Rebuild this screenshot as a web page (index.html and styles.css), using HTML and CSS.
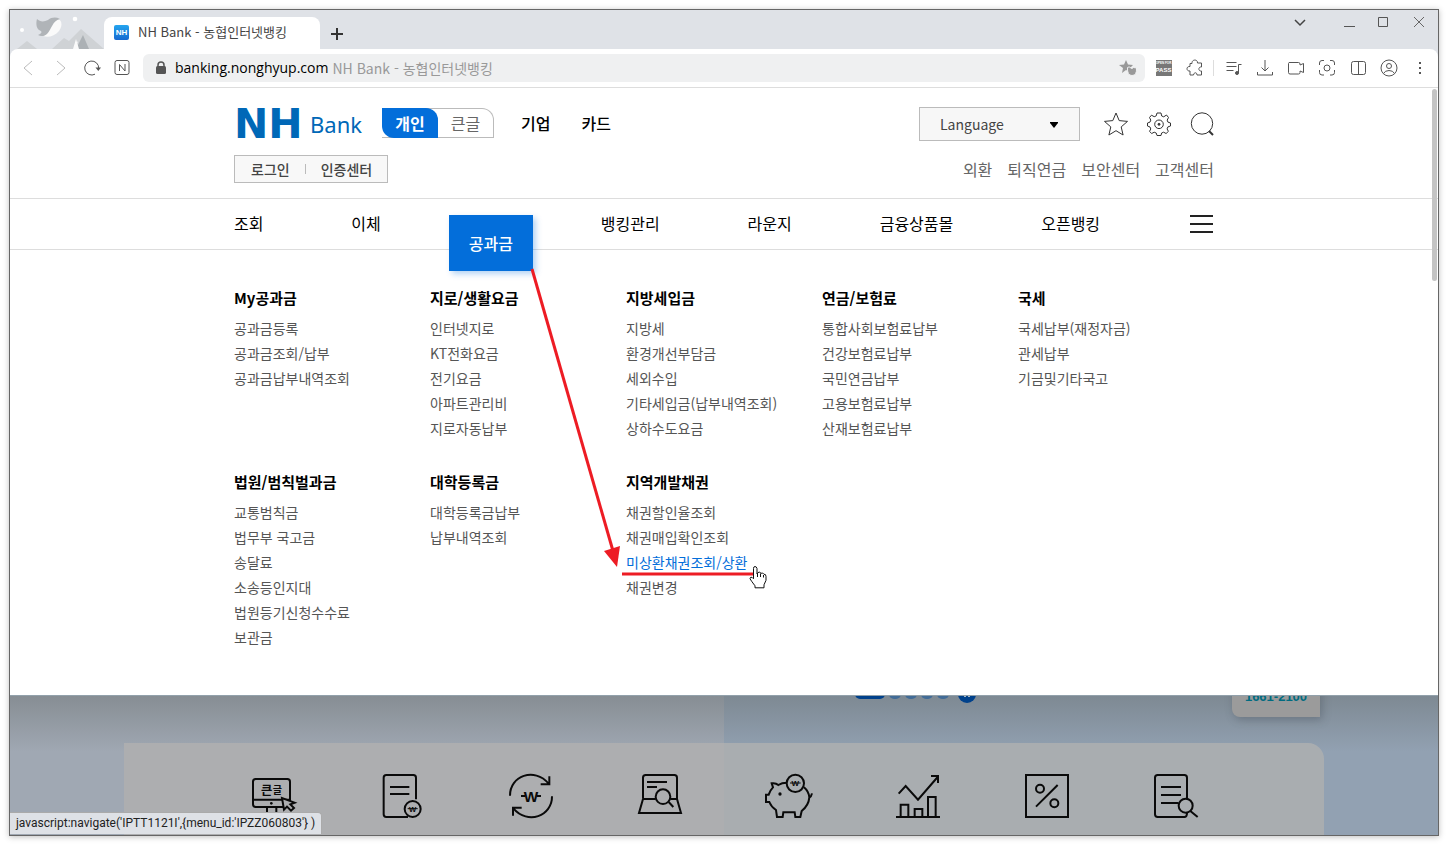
FILE: index.html
```html
<!DOCTYPE html>
<html lang="ko">
<head>
<meta charset="utf-8">
<title>NH Bank - 농협인터넷뱅킹</title>
<link rel="stylesheet" href="styles.css">
</head>
<body>
<div class="window">
  <div class="tabstrip">
    <svg class="theme-art" viewBox="0 0 94 39" aria-hidden="true">
      <path d="M7 39 17 31 27 39Z M42 39 54 28 59 31 71 19 94 39Z" fill="#cfd2d5"/>
      <path d="M66 39 73 25 79 39Z" fill="#acb1b5"/>
      <path d="M63 39 66 29 69 39Z M65 35 68 31 66 39Z" fill="#fafafa"/>
      <circle cx="12" cy="20" r="2" fill="#fff"/><circle cx="65" cy="9" r="2.300" fill="#fff"/>
      <path d="M44 9C51 7 54 14 49 21 45 26 38 28 33 26 41 23 38 13 44 9Z" fill="#fafafa"/>
      <path d="M27 9C30 12 34 12 38 10 42 7 46 7 50 9 42 11 42 19 37 24 35 26 31 27 28 25 33 23 32 21 29 20 26 18 26 12 27 9Z" fill="#b0b4b8"/>
    </svg>
    <div class="tab">
      <span class="favicon">NH</span>
      <span>NH Bank - 농협인터넷뱅킹</span>
    </div>
    <button class="new-tab" aria-label="새 탭"><svg width="14" height="14" viewBox="0 0 14 14"><path d="M7 1v12M1 7h12" stroke="#333" stroke-width="2" fill="none"/></svg></button>
    <div class="window-controls">
      <button class="wc-list" aria-label="탭 목록"><svg width="14" height="14" viewBox="0 0 14 14"><path d="M2 5l5 5 5-5" stroke="#444" stroke-width="1.500" fill="none"/></svg></button>
      <button aria-label="최소화"><svg width="14" height="14" viewBox="0 0 14 14"><path d="M2 11.500h11" stroke="#555" fill="none"/></svg></button>
      <button aria-label="최대화"><svg width="14" height="14" viewBox="0 0 14 14"><path d="M1.500 2.500h9v9h-9z" stroke="#555" fill="none"/></svg></button>
      <button aria-label="닫기"><svg width="14" height="14" viewBox="0 0 14 14"><path d="M2 2l10 10M12 2 2 12" stroke="#666" fill="none"/></svg></button>
    </div>
  </div>

  <div class="toolbar">
    <div class="nav-buttons">
      <button class="nb-back" aria-label="뒤로"><svg class="tool-icon faint" viewBox="0 0 18 18"><path d="M13 2 5 9l8 7"/></svg></button>
      <button class="nb-next" aria-label="앞으로"><svg class="tool-icon faint" viewBox="0 0 18 18"><path d="M5 2l8 7-8 7"/></svg></button>
      <button aria-label="새로고침"><svg class="tool-icon" viewBox="0 0 18 18"><path d="M12 15.200A7 7 0 1 1 15.700 9.500"/><path d="M12.500 8.500h5.500l-2.700 3.500z" fill="#555" stroke="none"/></svg></button>
      <button aria-label="네이버"><svg class="tool-icon" viewBox="0 0 18 18"><rect x="2" y="1.500" width="14" height="14" rx="2"/><path d="M6.500 12V5.500l5.500 6.500V5"/></svg></button>
    </div>
    <div class="omnibox">
      <svg class="lock" viewBox="0 0 12 14"><path d="M3 6V4a3 3 0 0 1 6 0v2" stroke="#555" stroke-width="1.500" fill="none"/><rect x="1" y="5" width="10" height="8" rx="1.500" fill="#555"/></svg>
      <span class="host">banking.nonghyup.com</span>
      <span class="page-name">NH Bank - 농협인터넷뱅킹</span>
      <button class="fav" aria-label="즐겨찾기"><svg width="18" height="18" viewBox="0 0 18 18"><path d="M7 1l2 4.500 5 .5-3 3 0 4-4-2-4 3 1-5L0 6l5-.5z" fill="#999"/><path d="M8.500 8.500q1.500-1.500 3.500.5l1 .5 1.500-1 3 .5q.5 7.500-4.500 7.500t-4.500-8z" fill="#999" stroke="#eff0f1"/></svg></button>
    </div>
    <div class="ext-buttons">
      <button aria-label="PASS"><span class="pass"><small>OPEN FOR</small>PASS</span></button>
      <button aria-label="확장 프로그램"><svg class="tool-icon" viewBox="0 0 18 18"><path d="M6 4.500C5.500 0 12 0 11.500 4H15.500V8C12 7.500 12 12.500 15.500 12V16H11C11 13 8 13 7.500 16H4V12C0 12.500 0 7 4 7.500V4.500Z"/></svg></button>
      <i class="sep"></i>
      <button aria-label="재생 목록"><svg class="tool-icon" viewBox="0 0 18 18"><path d="M1.500 3.500h10M1.500 7.500h10M1.500 11.500h7M13.500 14V5.500h3"/><circle cx="12" cy="14" r="1.500" fill="#555"/></svg></button>
      <button aria-label="다운로드"><svg class="tool-icon" viewBox="0 0 18 18"><path d="M9 1v11M5.500 8.500 9 12l3.500-3.500M1.500 13v3h15v-3"/></svg></button>
      <button aria-label="녹화"><svg class="tool-icon" viewBox="0 0 18 18"><path d="M2 3.500h9.500q1.500 0 1.500 1.500v1l3.500-1.500v9L13 12v1.500q0 1.500-1.500 1.500H3q-1.500 0-1.500-1.500V4.500z"/></svg></button>
      <button aria-label="캡처"><svg class="tool-icon" viewBox="0 0 18 18"><path d="M1.500 6V4q0-2.500 2.500-2.500h2M12 1.500h2q2.500 0 2.500 2.500v2M16.500 11v2.500q0 2.500-2.500 2.500h-2M6 16H4q-2.500 0-2.500-2.500V11"/><circle cx="9" cy="9" r="3"/></svg></button>
      <button aria-label="화면 분할"><svg class="tool-icon" viewBox="0 0 18 18"><rect x="2.500" y="2.500" width="14" height="13" rx="2"/><path d="M9.500 2.500v13"/></svg></button>
      <button aria-label="프로필"><svg class="tool-icon" viewBox="0 0 18 18"><circle cx="9" cy="9" r="8"/><circle cx="9" cy="7" r="2.500"/><path d="M3.500 14.500q1.500-3 5.500-3t5.500 3"/></svg></button>
      <button aria-label="메뉴"><svg class="tool-icon" viewBox="0 0 18 18"><path d="M8 3h2v2H8zM8 8h2v2H8zM8 13h2v2H8z" fill="#555" stroke="none"/></svg></button>
    </div>
  </div>

  <div class="page">
    <header class="site-header">
      <div class="container">
        <div class="head-row">
          <a class="logo" href="#"><span class="logo-nh">NH</span><span class="logo-bank">Bank</span></a>
          <div class="mode"><button class="mode-on">개인</button><button class="mode-off">큰글</button></div>
          <a class="seg-corp" href="#">기업</a>
          <a class="seg-card" href="#">카드</a>
          <div class="tools">
            <label class="lang"><select aria-label="Language"><option>Language</option></select><svg width="8" height="6" viewBox="0 0 8 6"><path d="M0 0h8v1L4 6 0 1z" fill="#000"/></svg></label>
            <button aria-label="즐겨찾기"><svg class="head-icon" viewBox="0 0 24 24"><path d="M12 1l3.200 7.600 8.300.8-6.300 5.500 1.900 8.100L12 18.700 4.900 23l1.900-8.100L.5 9.400l8.300-.8z"/></svg></button>
            <button aria-label="설정"><svg class="head-icon" viewBox="0 0 24 24"><path d="M10 1h4l.7 3 2 .8L19.500 3l2 2.500-1.300 2.600.7 2 2.600.9v3l-2.600.9-.8 2 1.300 2.500-2.300 2.100-2.500-1.300-2 .8-.6 2.500h-4l-.8-2.500-2-.8-2.500 1.300L2.500 19.400 3.800 17 3 15l-2.500-1v-3l2.500-.9.8-2L2.500 5.500l2-2.300L7.200 4.700l2-.8z"/><circle cx="12" cy="12.300" r="4.300"/><circle cx="12" cy="12.300" r="1" fill="#333"/></svg></button>
            <button aria-label="검색"><svg class="head-icon" viewBox="0 0 24 24"><circle cx="12" cy="11.500" r="10.700"/><path d="M19 19l4 4" stroke-width="2"/></svg></button>
          </div>
        </div>
        <div class="head-row second">
          <div class="login"><a href="#">로그인</a><i></i><a href="#">인증센터</a></div>
          <nav class="links"><a href="#">외환</a><a href="#">퇴직연금</a><a href="#">보안센터</a><a href="#">고객센터</a></nav>
        </div>
      </div>
    </header>

    <nav class="gnb">
      <div class="container gnb-row">
        <a href="#">조회</a><a href="#">이체</a><a class="current" href="#">공과금</a><a href="#">뱅킹관리</a><a href="#">라운지</a><a href="#">금융상품몰</a><a href="#">오픈뱅킹</a>
        <button class="burger" aria-label="전체메뉴"><svg width="24" height="20" viewBox="0 0 24 20"><path d="M0 2h23M0 10h23M0 18h23" stroke="#222" stroke-width="2"/></svg></button>
      </div>
    </nav>

    <div class="mega">
      <div class="container mega-grid">
        <section><h2>My공과금</h2><ul><li><a href="#">공과금등록</a></li><li><a href="#">공과금조회/납부</a></li><li><a href="#">공과금납부내역조회</a></li></ul></section>
        <section><h2>지로/생활요금</h2><ul><li><a href="#">인터넷지로</a></li><li><a href="#">KT전화요금</a></li><li><a href="#">전기요금</a></li><li><a href="#">아파트관리비</a></li><li><a href="#">지로자동납부</a></li></ul></section>
        <section><h2>지방세입금</h2><ul><li><a href="#">지방세</a></li><li><a href="#">환경개선부담금</a></li><li><a href="#">세외수입</a></li><li><a href="#">기타세입금(납부내역조회)</a></li><li><a href="#">상하수도요금</a></li></ul></section>
        <section><h2>연금/보험료</h2><ul><li><a href="#">통합사회보험료납부</a></li><li><a href="#">건강보험료납부</a></li><li><a href="#">국민연금납부</a></li><li><a href="#">고용보험료납부</a></li><li><a href="#">산재보험료납부</a></li></ul></section>
        <section><h2>국세</h2><ul><li><a href="#">국세납부(재정자금)</a></li><li><a href="#">관세납부</a></li><li><a href="#">기금및기타국고</a></li></ul></section>
        <section><h2>법원/범칙벌과금</h2><ul><li><a href="#">교통범칙금</a></li><li><a href="#">법무부 국고금</a></li><li><a href="#">송달료</a></li><li><a href="#">소송등인지대</a></li><li><a href="#">법원등기신청수수료</a></li><li><a href="#">보관금</a></li></ul></section>
        <section><h2>대학등록금</h2><ul><li><a href="#">대학등록금납부</a></li><li><a href="#">납부내역조회</a></li></ul></section>
        <section><h2>지역개발채권</h2><ul><li><a href="#">채권할인율조회</a></li><li><a href="#">채권매입확인조회</a></li><li><a class="hover" href="#">미상환채권조회/상환</a></li><li><a href="#">채권변경</a></li></ul></section>
        <svg class="annotation" viewBox="524 250 250 350" aria-hidden="true">
          <path d="M532 269 613 551" stroke="#ed1c24" stroke-width="3" fill="none"/>
          <path d="M604 551 620 546 617 567Z" fill="#ed1c24"/>
          <path d="M622 574H754" stroke="#ed1c24" stroke-width="3"/>
          <path d="M753.500 568.500q0-2 1.500-2t2 2v5.500l1-1.500q2-1 3 .8 2-1 3 1 1.800-.5 2 2v4l-2 4.500v3h-9v-2l-3-4-2-3q0-2 2-1.500l1.500 1.500z" fill="#fff" stroke="#111" stroke-linejoin="round"/>
          <path d="M757.500 573v4M760.500 573.500v3.500M763.500 575v2.500" stroke="#111"/>
        </svg>
      </div>
    </div>

    <div class="below">
      <div class="banner">
        <div class="pager"><i class="on"></i><i></i><i></i><i></i><i></i><button aria-label="일시정지"><svg width="18" height="18" viewBox="0 0 18 18"><circle cx="9" cy="9" r="9" fill="#00418b"/><path d="M7 6v6M11 6v6" stroke="#a9b9c4" stroke-width="2"/></svg></button></div>
        <div class="phone">1661-2100</div>
      </div>
      <div class="quick">
        <a href="#" aria-label="큰글"><svg class="quick-icon" viewBox="741 276 150 144"><rect x="756" y="297" width="111" height="84" rx="8"/><path d="M756 359H867M798 382v20M826 382v20M784 402h56"/><circle cx="811" cy="370" r="4" class="solid"/><text x="780" y="344" font-size="37">큰</text><text x="815" y="342" font-size="30">글</text><path d="M843 354l6 35 9-9 12 12 9-8-11-11 13-5z" fill="#adaeb0"/></svg></a>
        <a href="#" aria-label="공과금"><svg class="quick-icon" viewBox="1129 276 150 144"><path d="M1246 358V293q0-8-8-8H1157q-8 0-8 8V403q0 8 8 8h65M1168 321h58M1168 342h58"/><circle cx="1236" cy="387" r="24"/><text x="1236" y="395" text-anchor="middle" font-size="23">W</text><path class="strike" d="M1221 386h30"/></svg></a>
        <a href="#" aria-label="이체"><svg class="quick-icon" viewBox="138 66 150 144"><path d="M150 137C149 78 223 50 266 101M268 79v24h-26M276 139C277 198 203 226 160 175M159 197v-24h26"/><text x="213" y="156" text-anchor="middle" font-size="46">W</text><path d="M183 138h13M230 138h13"/></svg></a>
        <a href="#" aria-label="조회"><svg class="quick-icon" viewBox="525 66 150 144"><path d="M549 146V83q0-8 8-8h86q8 0 8 8v63M549 147h38M631 147h20L663 189H537L549 147M561 96h60M561 111h30M626 156l14 15"/><circle cx="609" cy="140" r="22"/></svg></a>
        <a href="#" aria-label="예금"><svg class="quick-icon" viewBox="912 66 150 144"><path d="M980 98q-14 0-25 7-8-7-20-5l4 12q-9 9-13 22h-8v22h10q6 15 20 24l3 21h17l2-14h34l2 14h15l4-18q21-17 23-41-2-18-16-30M1047 144q7-4 9-14"/><circle cx="1006" cy="100" r="26"/><circle cx="960" cy="132" r="5" class="solid"/><text x="1006" y="109" text-anchor="middle" font-size="24">W</text><path class="strike" d="M990 99h32"/></svg></a>
        <a href="#" aria-label="투자"><svg class="quick-icon" viewBox="99 66 150 144"><path d="M108 201H240M122 201v-37h23v37M164 201v-24h23v24M204 201v-60h23v60M116 131l21-23 37 41 59-68M213 78h21v21"/></svg></a>
        <a href="#" aria-label="금리"><svg class="quick-icon" viewBox="486 66 150 144"><path d="M498 75H624V201H498zM528 170l65-65"/><circle cx="540" cy="116" r="12"/><circle cx="583" cy="160" r="12"/></svg></a>
        <a href="#" aria-label="명세"><svg class="quick-icon" viewBox="873 66 150 144"><path d="M981 146V83q0-8-8-8H893q-8 0-8 8V193q0 8 8 8h80q8 0 8-12M903 111h60M903 135h60M903 159h52M990 182l23 19"/><circle cx="977" cy="167" r="21"/></svg></a>
      </div>
    </div>
    <div class="scroll-thumb"></div>
  </div>
  <div class="status">javascript:navigate('IPTT1121I',{menu_id:'IPZZ060803'} )</div>
</div>
</body>
</html>
```
FILE: styles.css
```css
* { box-sizing: border-box; }
body {
  margin: 0;
  padding: 9px 9px 10px;
  background: #fff;
  font-family: "Noto Sans CJK KR", sans-serif;
  color: #000;
}
a { color: inherit; text-decoration: none; }
button { border: 0; padding: 0; background: none; font: inherit; color: inherit; }
svg { display: block; flex: none; }
ul, h2 { margin: 0; padding: 0; list-style: none; }

.window {
  position: relative;
  display: flex;
  flex-direction: column;
  min-height: calc(100vh - 19px);
  border: 1px solid #666;
  background: #dfe2e7;
  box-shadow: 0 1px 6px rgba(0, 0, 0, .25);
}

/* Tab strip */
.tabstrip { display: flex; height: 39px; }
.theme-art { width: 94px; height: 39px; }
.tab {
  display: flex;
  align-items: center;
  gap: 9px;
  width: 216px;
  margin-top: 7px;
  padding: 0 0 2px 10px;
  border-radius: 8px 8px 0 0;
  background: #fff;
  font-size: 13px;
  line-height: 20px;
  color: #444;
}
.favicon {
  width: 15px;
  height: 15px;
  border-radius: 2px;
  background: linear-gradient(#24a5ef, #1769d0);
  color: #fff;
  font: bold 8px/15px "Liberation Sans", sans-serif;
  text-align: center;
}
.new-tab { width: 34px; padding: 8px 0 0 10px; }
.window-controls { display: flex; margin-left: auto; height: 24px; padding-right: 2px; }
.window-controls button { display: grid; place-items: center; width: 35px; }
.window-controls .wc-list { margin-right: 14px; }

/* Toolbar */
.toolbar {
  display: flex;
  align-items: center;
  height: 39px;
  padding-right: 3px;
  border-bottom: 1px solid #ddd;
  border-radius: 8px 8px 0 0;
  background: #fff;
}
.nav-buttons, .ext-buttons { display: flex; align-items: center; }
.nav-buttons { padding: 0 6px 0 1px; }
.nav-buttons button { display: grid; place-items: center; width: 30px; }
.nav-buttons .nb-back { width: 34px; }
.nav-buttons .nb-next { width: 32px; }
.ext-buttons { padding-left: 3px; }
.ext-buttons button { display: grid; place-items: center; width: 31px; }
.sep { width: 1px; height: 16px; margin: 0 4px 0 3px; background: #ddd; }
.tool-icon { width: 18px; height: 18px; fill: none; stroke: #555; }
.tool-icon.faint { stroke: #bbb; }
.pass {
  width: 16px;
  height: 16px;
  background: #777;
  color: #fff;
  font: bold 6px/7px "Liberation Sans", sans-serif;
  text-align: center;
}
.pass small { display: block; font-size: 3px; line-height: 7px; }
.omnibox {
  flex: 1;
  display: flex;
  align-items: center;
  height: 28px;
  padding: 0 8px 0 12px;
  border-radius: 6px;
  background: #eff0f1;
  font-size: 14px;
}
.lock { width: 12px; height: 14px; margin-right: 8px; }
.host { margin-right: 4px; font-family: "Open Sans", sans-serif; line-height: 20px; }
.page-name { color: #999; font-size: 14px; line-height: 20px; }
.fav { margin-left: auto; }

/* Site header */
.page { position: relative; flex: 1; display: flex; flex-direction: column; background: #fff; }
.container { width: 980px; max-width: 100%; margin: 0 auto; }
.site-header { padding: 19px 0 15px; border-bottom: 1px solid #ddd; }
.head-row { display: flex; align-items: center; height: 34px; font-size: 16px; }
.head-row.second { height: 28px; margin-top: 14px; justify-content: space-between; }
.logo { display: flex; align-items: center; width: 148px; color: #0068b7; }
.logo-nh { width: 76px; font: bold 41px/34px "DejaVu Sans", sans-serif; }
.logo-bank { font: 22px/34px "Noto Sans", sans-serif; }
.mode {
  display: flex;
  width: 112px;
  height: 30px;
  margin-bottom: 2px;
  border: 1px solid #bbb;
  border-left: 0;
  border-radius: 0 12px 0 0;
}
.mode-on { width: 56px; margin: -1px 0; border-radius: 0 12px 0 12px; background: #036eda; color: #fff; font-weight: 700; }
.mode-off { flex: 1; color: #666; }
.seg-corp { margin-left: 27px; padding-bottom: 2px; font-weight: 500; }
.seg-card { margin-left: 31px; padding-bottom: 2px; font-weight: 500; }
.tools { display: flex; align-items: center; gap: 19px; margin-left: auto; }
.lang { display: flex; align-items: center; position: relative; margin-right: 5px; }
.lang select {
  appearance: none;
  width: 161px;
  height: 34px;
  padding: 0 20px;
  border: 1px solid #bbb;
  border-radius: 0;
  background: #f7f7f7;
  color: #444;
  font: 14px "Noto Sans CJK KR", sans-serif;
}
.lang svg { position: absolute; right: 22px; top: 15px; }
.head-icon { width: 24px; height: 24px; fill: none; stroke: #333; }
.login {
  display: flex;
  align-items: center;
  gap: 15px;
  height: 28px;
  padding: 0 15px 0 16px;
  border: 1px solid #bbb;
  background: #f8f8f8;
  color: #444;
  font-size: 14px;
  font-weight: 500;
}
.login i { width: 1px; height: 10px; background: #bbb; }
.links { display: flex; gap: 15px; color: #666; }

/* Main navigation */
.gnb { height: 51px; border-bottom: 1px solid #ddd; }
.gnb-row { display: flex; justify-content: space-between; font-size: 16px; line-height: 49px; }
.gnb .current {
  position: relative;
  z-index: 1;
  height: 56px;
  margin: 16px -20px -22px;
  padding: 0 20px;
  background: #036eda;
  box-shadow: 3px 3px 6px rgba(3, 110, 218, .3);
  color: #fff;
  font-weight: 500;
  line-height: 57px;
}
.burger { display: flex; align-items: center; height: 50px; padding-left: 2px; }

/* Expanded menu */
.mega { padding: 36px 0 45px; }
.mega-grid { position: relative; display: grid; grid-template-columns: repeat(5, 196px); row-gap: 29px; }
.mega h2 { margin-bottom: 6px; font-size: 15px; line-height: 24px; font-weight: 700; }
.mega li { font-size: 14px; line-height: 25px; color: #555; }
.mega .hover { color: #036eda; }
.annotation { position: absolute; z-index: 2; left: 290px; top: -36px; width: 250px; height: 350px; pointer-events: none; }

/* Dimmed page under the menu */
.below {
  flex: 1;
  display: flex;
  flex-direction: column;
  border-top: 1px solid #92a1ab;
  overflow: hidden;
  background:
    linear-gradient(rgba(90, 95, 92, .36), rgba(90, 95, 92, 0) 56px),
    linear-gradient(90deg, #a0a8b3 50%, #92a1b2 50%);
}
.banner { position: relative; flex: none; height: 47px; width: 1200px; max-width: 100%; margin: 0 auto; }
.pager { position: absolute; left: 731px; top: -11px; display: flex; align-items: center; gap: 4px; }
.pager i { width: 12px; height: 10px; border-radius: 5px; background: #426c97; }
.pager .on { width: 30px; background: #00418b; }
.pager button { margin-left: 5px; }
.phone {
  position: absolute;
  right: 4px;
  top: -22px;
  width: 88px;
  height: 43px;
  border-radius: 0 0 0 8px;
  background: #9b9b9b;
  box-shadow: 2px 3px 8px rgba(60, 70, 80, .35);
  color: #006b80;
  font: bold 13px/46px "Liberation Sans", sans-serif;
  text-align: center;
}
.quick {
  flex: 1;
  display: flex;
  justify-content: center;
  width: 1200px;
  max-width: 100%;
  min-height: 91px;
  margin: 0 auto;
  padding-top: 29px;
  border-radius: 0 16px 0 0;
  background: linear-gradient(90deg, #adaeb0 50%, #a9adb0 50%);
}
.quick a { display: flex; justify-content: center; width: 129px; height: 48px; }
.quick-icon { width: 50px; height: 48px; fill: none; stroke: #0a0a0a; stroke-width: 6px; }
.quick-icon .solid { fill: #0a0a0a; stroke: none; }
.quick-icon .strike { stroke-width: 3px; }
.quick-icon text { fill: #0a0a0a; stroke: none; font-family: "Liberation Sans", "Noto Sans CJK KR", sans-serif; font-weight: 700; }

.scroll-thumb { position: absolute; right: 1px; top: 1px; width: 5px; height: 192px; border-radius: 3px; background: #c4c4c4; }
.status {
  position: absolute;
  left: 0;
  bottom: 1px;
  height: 22px;
  padding: 0 6px;
  border: 1px solid #aaa;
  border-width: 1px 1px 0 0;
  border-radius: 0 4px 0 0;
  background: #dee1e6;
  font: 12px/21px Roboto, sans-serif;
  color: #222;
}
```
